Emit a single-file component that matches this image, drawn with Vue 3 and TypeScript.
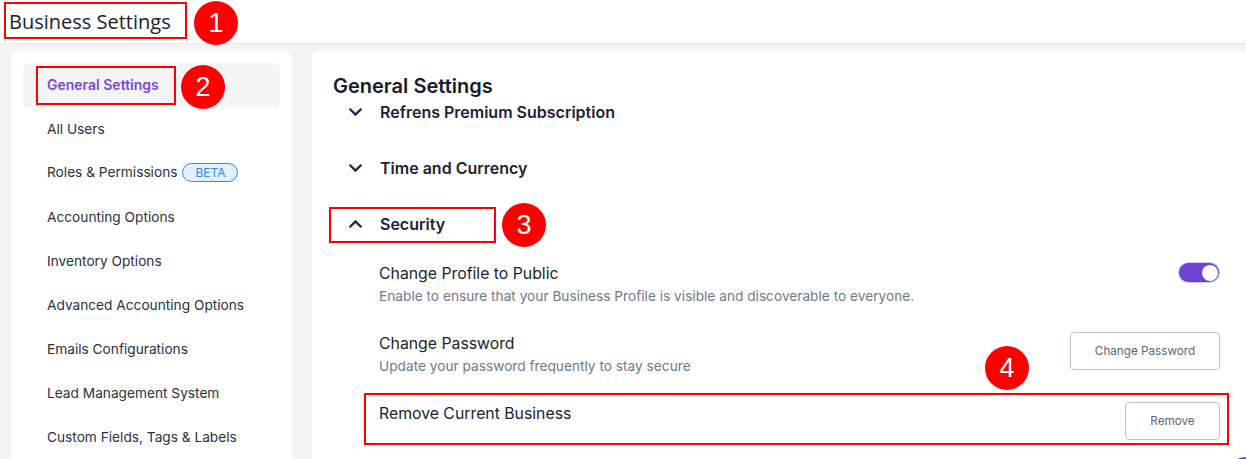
<template>
  <div class="page">
    <header class="topbar">
      <h1>Business Settings</h1>
    </header>

    <div class="body">
      <aside class="sidebar">
        <ul class="menu">
          <li v-for="item in menu" :key="item.label" :class="{ active: item.active, 'has-beta': item.beta }">
            <span>{{ item.label }}</span>
            <span v-if="item.beta" class="beta">BETA</span>
          </li>
        </ul>
      </aside>

      <main class="content">
        <h2>General Settings</h2>

        <div class="sections">
          <div class="section">
            <svg class="chevron" viewBox="0 0 14 9"><path d="M1.5 1.5 7 7l5.5-5.5" /></svg>
            <span>Refrens Premium Subscription</span>
          </div>
          <div class="section">
            <svg class="chevron" viewBox="0 0 14 9"><path d="M1.5 1.5 7 7l5.5-5.5" /></svg>
            <span>Time and Currency</span>
          </div>
          <div class="section">
            <svg class="chevron" viewBox="0 0 14 9"><path d="M1.5 7.5 7 2l5.5 5.5" /></svg>
            <span>Security</span>
          </div>
        </div>

        <div class="options">
          <div class="option first">
            <div>
              <div class="option-title">Change Profile to Public</div>
              <div class="option-desc">Enable to ensure that your Business Profile is visible and discoverable to everyone.</div>
            </div>
            <div class="toggle"><span class="knob"></span></div>
          </div>
          <div class="option second">
            <div>
              <div class="option-title">Change Password</div>
              <div class="option-desc">Update your password frequently to stay secure</div>
            </div>
            <button class="btn wide">Change Password</button>
          </div>
          <div class="option third">
            <div class="option-title">Remove Current Business</div>
            <button class="btn">Remove</button>
          </div>
        </div>
      </main>
    </div>

    <!-- annotations on top of the screenshot -->
    <div class="mark box-1"></div>
    <div class="mark box-2"></div>
    <div class="mark box-3"></div>
    <div class="mark box-4"></div>
    <div class="step step-1">1</div>
    <div class="step step-2">2</div>
    <div class="step step-3">3</div>
    <div class="step step-4">4</div>
    <div class="chat"></div>
  </div>
</template>

<script setup lang="ts">
interface MenuItem {
  label: string
  active?: boolean
  beta?: boolean
}

const menu: MenuItem[] = [
  { label: 'General Settings', active: true },
  { label: 'All Users' },
  { label: 'Roles & Permissions', beta: true },
  { label: 'Accounting Options' },
  { label: 'Inventory Options' },
  { label: 'Advanced Accounting Options' },
  { label: 'Emails Configurations' },
  { label: 'Lead Management System' },
  { label: 'Custom Fields, Tags & Labels' },
]
</script>

<style>
html,
body {
  margin: 0;
  overflow: hidden;
}
</style>

<style scoped>
.page {
  position: relative;
  width: 1246px;
  height: 459px;
  overflow: hidden;
  background: #f3f4f6;
  font-family: Inter, "Noto Sans", sans-serif;
  color: #1f2430;
}

.topbar {
  height: 43px;
  background: #fff;
  border-bottom: 1px solid #e6e8ec;
  display: flex;
  align-items: center;
  padding-left: 9px;
}

.topbar h1 {
  margin: 0 0 1px;
  font-family: "Open Sans", sans-serif;
  font-size: 20px;
  font-weight: 400;
  color: #1a2230;
}

.body {
  display: flex;
  gap: 20px;
  padding: 7px 0 0 11px;
}

.sidebar {
  width: 281px;
  height: 420px;
  flex: none;
  box-sizing: border-box;
  padding: 12px;
  background: #fff;
  border-radius: 8px;
}

.menu {
  list-style: none;
  margin: 0;
  padding: 0;
}

.menu li {
  height: 44px;
  box-sizing: border-box;
  display: flex;
  align-items: center;
  gap: 5px;
  padding-left: 24px;
  font-size: 13.7px;
  color: #2b3140;
  border-radius: 6px;
}

.menu li.has-beta {
  padding-bottom: 2px;
}

.menu li.active {
  background: #f3f4f6;
  color: #7b48db;
  font-size: 14px;
  font-weight: 600;
  padding-bottom: 1px;
}

.beta {
  width: 56px;
  height: 19px;
  box-sizing: border-box;
  display: flex;
  align-items: center;
  justify-content: center;
  border: 1px solid #2f8be6;
  border-radius: 10px;
  background: #e3effb;
  color: #2f8be6;
  font-size: 12px;
}

.content {
  flex: 1;
  height: 420px;
  box-sizing: border-box;
  padding: 23px 27px 0 21px;
  background: #fff;
  border-radius: 8px 0 0 8px;
}

.content h2 {
  margin: 0;
  font-size: 20px;
  line-height: 24px;
  font-weight: 600;
  color: #161c2a;
}

.sections {
  margin-top: -14px;
}

.section {
  height: 56px;
  display: flex;
  align-items: center;
  gap: 17px;
  padding-left: 15px;
  font-size: 16px;
  font-weight: 600;
  color: #1e2233;
}

.chevron {
  width: 15px;
  height: 10px;
  fill: none;
  stroke: #28234a;
  stroke-width: 2.2;
}

.options {
  padding: 12px 0 0 46px;
}

.option {
  display: flex;
  justify-content: space-between;
  align-items: flex-start;
}

.first {
  height: 70px;
}

.second {
  height: 70px;
}

.third {
  height: 40px;
}

.option-title {
  font-size: 15.8px;
  line-height: 20px;
  color: #1a1f2c;
}

.option-desc {
  margin-top: 3px;
  font-size: 13.7px;
  line-height: 18px;
  color: #6d7a8c;
}

.toggle {
  width: 40px;
  height: 19px;
  box-sizing: border-box;
  margin-top: -1px;
  padding: 1.5px;
  display: flex;
  justify-content: flex-end;
  border-radius: 10px;
  background: #6f42d5;
  box-shadow: 0 0 0 1px #c3cfe0;
}

.knob {
  width: 16px;
  height: 16px;
  border-radius: 50%;
  background: #fff;
}

.btn {
  width: 95px;
  height: 38px;
  flex: none;
  padding: 0;
  border: 1px solid #b4c2d6;
  border-radius: 4px;
  background: #fff;
  font-family: inherit;
  font-size: 11.7px;
  color: #5a6678;
}

.btn.wide {
  width: 150px;
  margin-top: -2px;
  margin-right: -1px;
}

.third .btn {
  margin-top: -2px;
  margin-right: -1px;
}

.mark {
  position: absolute;
  box-sizing: border-box;
  border: 2px solid #f00;
}

.box-1 {
  left: 4px;
  top: 2px;
  width: 183px;
  height: 37px;
}

.box-2 {
  left: 36px;
  top: 66px;
  width: 140px;
  height: 39px;
}

.box-3 {
  left: 329px;
  top: 207px;
  width: 167px;
  height: 36px;
}

.box-4 {
  left: 364px;
  top: 393px;
  width: 865px;
  height: 52px;
}

.step {
  position: absolute;
  width: 44px;
  height: 44px;
  border-radius: 50%;
  background: #f00;
  color: #fff;
  display: flex;
  align-items: center;
  justify-content: center;
  font-family: "Liberation Sans", sans-serif;
  font-size: 27px;
}

.step-1 {
  left: 194px;
  top: 1px;
}

.step-2 {
  left: 181px;
  top: 65px;
}

.step-3 {
  left: 502px;
  top: 203px;
}

.step-4 {
  left: 985px;
  top: 346px;
}

.chat {
  position: absolute;
  left: 1226px;
  top: 457px;
  width: 40px;
  height: 40px;
  border-radius: 50%;
  background: #6f42d5;
}
</style>
